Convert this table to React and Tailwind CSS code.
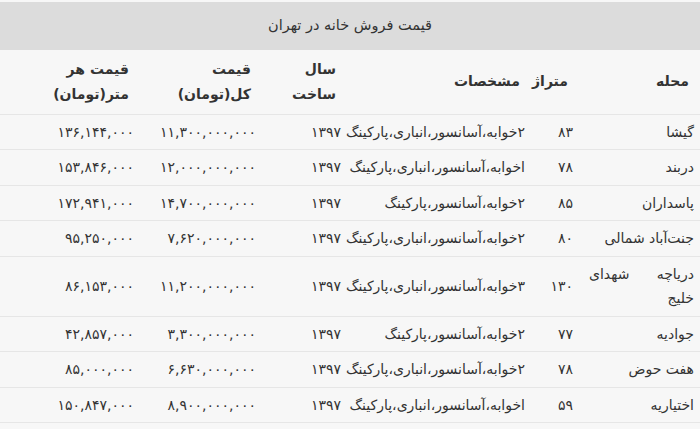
const rows = [
  { area: 'گیشا', size: '۸۳', spec: '۲خوابه،آسانسور،انباری،پارکینگ', year: '۱۳۹۷', total: '۱۱,۳۰۰,۰۰۰,۰۰۰', perM: '۱۳۶,۱۴۴,۰۰۰' },
  { area: 'دربند', size: '۷۸', spec: 'اخوابه،آسانسور،انباری،پارکینگ', year: '۱۳۹۷', total: '۱۲,۰۰۰,۰۰۰,۰۰۰', perM: '۱۵۳,۸۴۶,۰۰۰' },
  { area: 'پاسداران', size: '۸۵', spec: '۲خوابه،آسانسور،پارکینگ', year: '۱۳۹۷', total: '۱۴,۷۰۰,۰۰۰,۰۰۰', perM: '۱۷۲,۹۴۱,۰۰۰' },
  { area: 'جنت‌آباد شمالی', size: '۸۰', spec: '۲خوابه،آسانسور،انباری،پارکینگ', year: '۱۳۹۷', total: '۷,۶۲۰,۰۰۰,۰۰۰', perM: '۹۵,۲۵۰,۰۰۰' },
  { area: null, size: '۱۳۰', spec: '۳خوابه،آسانسور،انباری،پارکینگ', year: '۱۳۹۷', total: '۱۱,۲۰۰,۰۰۰,۰۰۰', perM: '۸۶,۱۵۳,۰۰۰' },
  { area: 'جوادیه', size: '۷۷', spec: '۲خوابه،آسانسور،پارکینگ', year: '۱۳۹۷', total: '۳,۳۰۰,۰۰۰,۰۰۰', perM: '۴۲,۸۵۷,۰۰۰' },
  { area: 'هفت حوض', size: '۷۸', spec: '۲خوابه،آسانسور،انباری،پارکینگ', year: '۱۳۹۷', total: '۶,۶۳۰,۰۰۰,۰۰۰', perM: '۸۵,۰۰۰,۰۰۰' },
  { area: 'اختیاریه', size: '۵۹', spec: 'اخوابه،آسانسور،انباری،پارکینگ', year: '۱۳۹۷', total: '۸,۹۰۰,۰۰۰,۰۰۰', perM: '۱۵۰,۸۴۷,۰۰۰' },
]

export default function App() {
  return (
    <div
      dir="rtl"
      className="w-[700px] h-[429px] overflow-hidden bg-[#f7f7f7] pt-[2px] text-[#333] text-[14px]"
      style={{ fontFamily: '"DejaVu Sans", sans-serif' }}
    >
      <div className="h-[48px] bg-[#dcdcdc] flex items-center justify-center text-[14.5px]">
        قیمت فروش خانه در تهران
      </div>
      <table className="w-full table-fixed border-collapse">
        <colgroup>
          <col className="w-[121px]" />
          <col className="w-[48px]" />
          <col className="w-[184px]" />
          <col className="w-[85px]" />
          <col className="w-[122px]" />
          <col className="w-[140px]" />
        </colgroup>
        <thead>
          <tr className="h-[64px] border-b border-[#e6e6e6] font-bold leading-[25px]">
            <th className="text-right align-middle pr-[11px]">محله</th>
            <th className="text-right align-middle pr-[11px]">متراژ</th>
            <th className="text-right align-middle pr-[11px]">مشخصات</th>
            <th className="text-right align-middle pr-[11px]">سال<br />ساخت</th>
            <th className="text-right align-middle pr-[11px]">قیمت<br />کل(تومان)</th>
            <th className="text-right align-middle pr-[11px]">قیمت هر<br />متر(تومان)</th>
          </tr>
        </thead>
        <tbody className="leading-[24.5px]">
          {rows.map((r, i) => (
            <tr key={i} className="border-b border-[#e6e6e6]">
              <td className="pr-[6px] pl-[10px] py-[5px] align-middle">
                {r.area ?? (
                  <div>
                    <div className="flex justify-between">
                      <span>دریاچه</span>
                      <span>شهدای</span>
                    </div>
                    <div>خلیج</div>
                  </div>
                )}
              </td>
              <td className="pr-[6px] py-[5px] align-middle">{r.size}</td>
              <td className="pr-[6px] py-[5px] align-middle whitespace-nowrap">{r.spec}</td>
              <td className="pr-[6px] py-[5px] align-middle">{r.year}</td>
              <td className="pr-[6px] py-[5px] align-middle">{r.total}</td>
              <td className="pr-[6px] py-[5px] align-middle">{r.perM}</td>
            </tr>
          ))}
        </tbody>
      </table>
    </div>
  )
}
